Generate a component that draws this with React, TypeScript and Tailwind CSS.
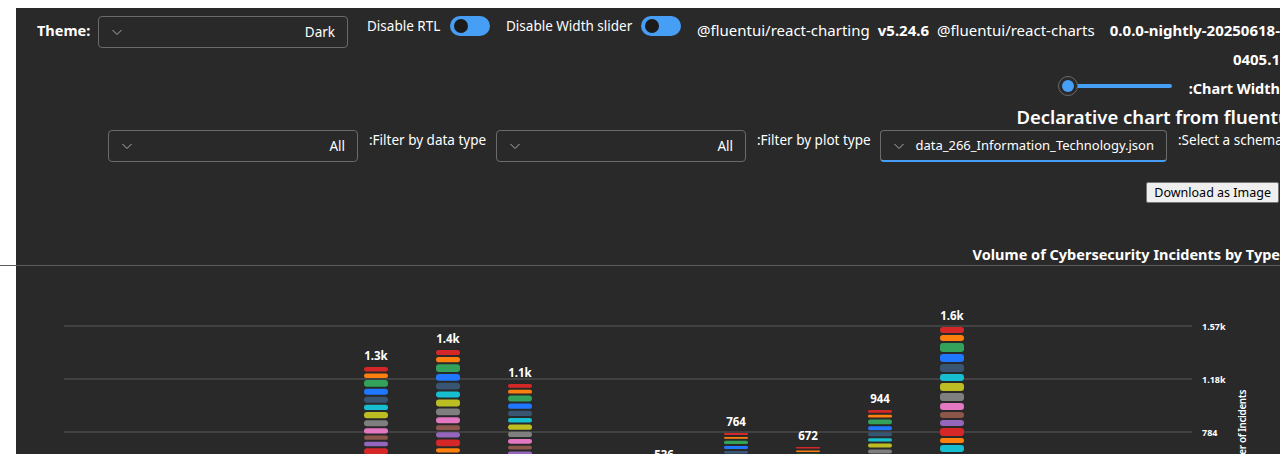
import React from 'react';

const RED = '#d62728';
const ORANGE = '#ff7f0e';
const GREEN = '#33a35b';
const BLUE = '#1f78ff';
const SLATE = '#3a5572';
const CYAN = '#17becf';
const OLIVE = '#bcbd22';
const GRAY = '#7f7f7f';
const PINK = '#e377c2';
const BROWN = '#8c564b';
const PURPLE = '#9467bd';

const colors = [RED, ORANGE, GREEN, BLUE, SLATE, CYAN, OLIVE, GRAY, PINK, BROWN, PURPLE, RED, ORANGE, CYAN, GREEN, BLUE, SLATE, OLIVE, GRAY, PINK, BROWN, PURPLE, RED, ORANGE];
const steps = [8, 8, 11, 10, 10, 9, 10, 10, 9, 8, 8, 10, 7, 9, 9, 10, 9, 10, 9, 8, 8, 10, 9, 8];

// bar center x, top y (svg coords), scale, label
const bars = [
  { x: 360, top: 101, s: 0.805, label: '1.3k' },
  { x: 432, top: 84, s: 0.885, label: '1.4k' },
  { x: 504, top: 118, s: 0.725, label: '1.1k' },
  { x: 648, top: 200, s: 0.34, label: '536' },
  { x: 720, top: 167, s: 0.485, label: '764' },
  { x: 792, top: 181, s: 0.427, label: '672' },
  { x: 864, top: 144, s: 0.6, label: '944' },
  { x: 936, top: 61, s: 1, label: '1.6k' },
];

function Chevron() {
  return (
    <svg width="12" height="12" viewBox="0 0 12 12" fill="none" className="shrink-0">
      <path d="M1.5 4 L6 8.5 L10.5 4" stroke="#adadad" strokeWidth="1" />
    </svg>
  );
}

function Dropdown({ value, className, textClass }: { value: string; className: string; textClass?: string }) {
  return (
    <div className={`flex h-8 items-center gap-2 rounded border border-[#6b6b6b] bg-[#292929] pl-3 pr-3 text-white ${className}`}>
      <Chevron />
      <span className={`min-w-0 flex-1 text-right whitespace-nowrap ${textClass ?? 'text-[13.5px]'}`}>{value}</span>
    </div>
  );
}

function Toggle() {
  return (
    <div className="flex h-5 w-10 shrink-0 items-center rounded-full bg-[#479ef5] pl-[4px]">
      <div className="h-[14px] w-[14px] rounded-full bg-[#1b1b1b]" />
    </div>
  );
}

function Chart() {
  return (
    <svg width="1264" height="188" className="block">
      {[60, 113, 166].map((y, i) => (
        <line key={y} x1="48" x2="1176" y1={y} y2={y} stroke={i === 0 ? '#5a5a5a' : '#4a4a4a'} strokeWidth={i === 0 ? 1 : 1.5} />
      ))}
      <text x="1186" y="63.5" fill="#fff" fontSize="9" fontWeight="700">1.57k</text>
      <text x="1186" y="116.5" fill="#fff" fontSize="9" fontWeight="700">1.18k</text>
      <text x="1186" y="169.5" fill="#fff" fontSize="9" fontWeight="700">784</text>
      <text
        x="1230"
        y="124"
        fill="#fff"
        fontSize="10"
        fontWeight="600"
        letterSpacing="-0.4"
        textAnchor="end"
        transform="rotate(-90 1230 124)"
      >
        Number of Incidents
      </text>
      {bars.map((b) => {
        let y = b.top;
        const rects: React.ReactNode[] = [];
        steps.forEach((st, i) => {
          const h = st * b.s;
          const hh = Math.max(1.5, h - 2);
          if (y < 200) {
            rects.push(
              <rect key={i} x={b.x - 12} y={y} width="24" height={hh} rx={Math.min(3, hh / 2)} fill={colors[i]} />
            );
          }
          y += h;
        });
        return (
          <g key={b.x}>
            <text x={b.x} y={b.top - 7} fill="#fff" fontSize="11.5" fontWeight="700" textAnchor="middle">
              {b.label}
            </text>
            {rects}
          </g>
        );
      })}
    </svg>
  );
}

export default function App() {
  return (
    <div className="h-[454px] w-[1280px] overflow-hidden bg-white pt-2 font-['Segoe_UI','Noto_Sans',sans-serif]">
      <div className="ml-4 h-[446px] bg-[#292929] pt-2 text-white">
        {/* top controls */}
        <div className="flex items-start">
          <span className="ml-[21px] mr-2 w-[53px] text-[14.5px] font-bold leading-[29px]">Theme:</span>
          <Dropdown value="Dark" className="w-[250px]" />
          <span className="ml-[19px] mr-[4px] w-[79px] text-[13.5px] leading-5 whitespace-nowrap">Disable RTL</span>
          <Toggle />
          <span className="ml-4 mr-[12px] w-[123px] text-[13.5px] leading-5 whitespace-nowrap">Disable Width slider</span>
          <Toggle />
          <div className="ml-4 flex flex-1 items-start text-[15px] leading-[29px]">
            <span className="whitespace-nowrap">@fluentui/react-charting</span>
            <span className="ml-2 font-bold">v5.24.6</span>
            <span className="ml-2 whitespace-nowrap">@fluentui/react-charts</span>
            <span className="ml-auto text-right font-bold whitespace-nowrap">
              0.0.0-nightly-20250618-
              <br />
              0405.1
            </span>
          </div>
        </div>

        {/* chart width slider */}
        <div className="flex h-[30px] items-center justify-end">
          <div className="relative mb-[6px] flex h-5 w-[114px] items-center">
            <div className="ml-[10px] h-1 flex-1 rounded-full bg-[#479ef5]" />
            <div className="absolute left-0 top-0 flex h-5 w-5 items-center justify-center rounded-full border border-[#6b6b6b] bg-[#292929]">
              <div className="h-3 w-3 rounded-full bg-[#479ef5]" />
            </div>
          </div>
          <span className="ml-[17px] text-[14.5px] font-bold whitespace-nowrap">:Chart Width</span>
        </div>

        <div className="-mr-[15px] text-right text-[18.5px] font-semibold leading-[26px] whitespace-nowrap">
          Declarative chart from fluentui
        </div>

        {/* filters */}
        <div className="flex items-start justify-end">
          <Dropdown value="All" className="w-[250px] shrink-0" />
          <span className="ml-[11px] w-[116px] shrink-0 text-[13.5px] leading-5 whitespace-nowrap">:Filter by data type</span>
          <Dropdown value="All" className="ml-[11px] w-[250px] shrink-0" />
          <span className="ml-[11px] w-[112px] shrink-0 text-[13.5px] leading-5 whitespace-nowrap">:Filter by plot type</span>
          <Dropdown
            value="data_266_Information_Technology.json"
            textClass="text-[13px]"
            className="ml-[11px] w-[287px] shrink-0 border-b-2 border-b-[#479ef5]"
          />
          <span className="ml-[11px] w-[102px] shrink-0 text-[13.5px] leading-5 whitespace-nowrap">:Select a schema</span>
        </div>

        <div className="mt-5 flex justify-end pr-px">
          <button className="h-[21px] rounded-[2px] border border-[#767676] bg-[#efefef] px-[7px] text-[12.5px] leading-[19px] text-black">
            Download as Image
          </button>
        </div>

        <div className="mt-[41px] text-right text-[14.5px] font-bold leading-5 whitespace-nowrap">
          Volume of Cybersecurity Incidents by Type
        </div>
        <div className="-ml-4 mt-px h-px w-[1280px] bg-[#5c5c5c]" />

        <Chart />
      </div>
    </div>
  );
}
